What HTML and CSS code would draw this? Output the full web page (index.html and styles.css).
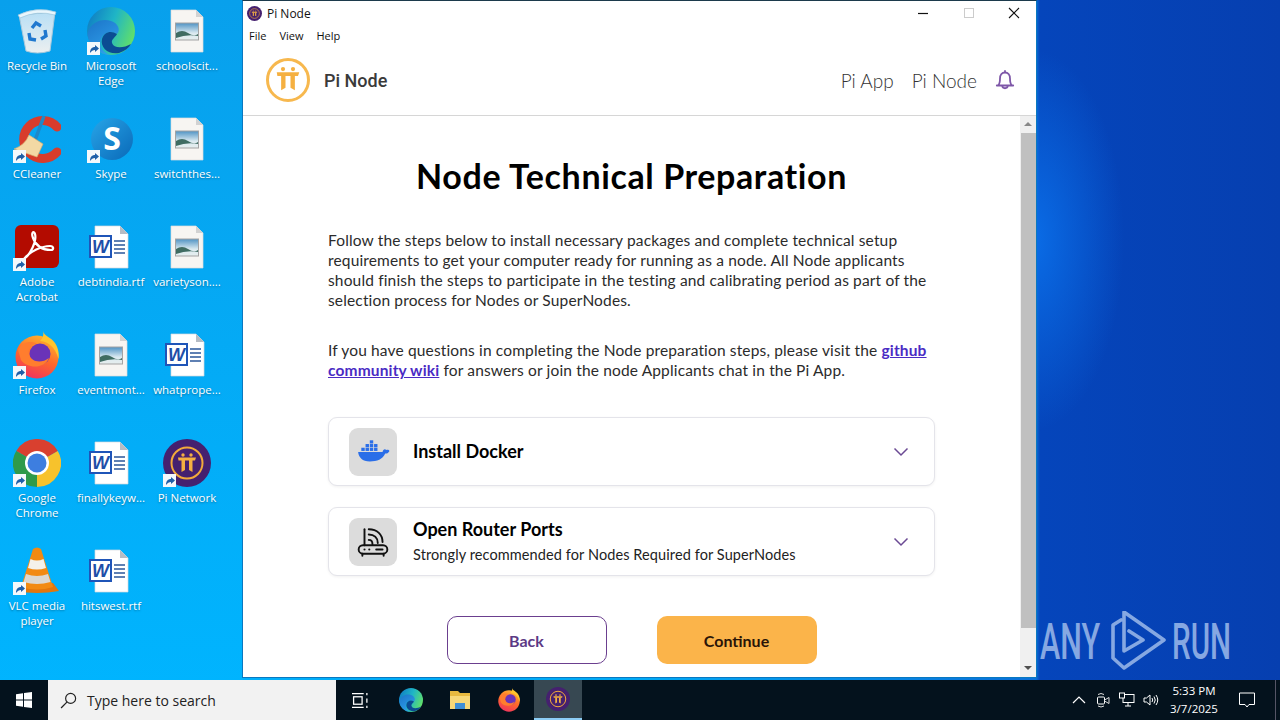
FILE: index.html
```html
<!DOCTYPE html>
<html lang="en">
<head>
<meta charset="utf-8">
<title>Pi Node</title>
<link rel="stylesheet" href="styles.css">
</head>
<body>
<svg class="defs" width="0" height="0" aria-hidden="true">
  <defs>
    <linearGradient id="edgeG" x1="0" y1="0.2" x2="1" y2="0.6"><stop offset="0" stop-color="#0f7cc4"/><stop offset=".5" stop-color="#1fb5c6"/><stop offset="1" stop-color="#62e068"/></linearGradient>
    <linearGradient id="edgeW" x1="0" y1="0" x2="0.6" y2="1"><stop offset="0" stop-color="#1b74c8"/><stop offset="1" stop-color="#2f9fea"/></linearGradient>
    <linearGradient id="skypeG" x1="0" y1="0" x2="1" y2="1"><stop offset="0" stop-color="#27a5e8"/><stop offset="1" stop-color="#0a69b8"/></linearGradient>
    <linearGradient id="foxG" x1="0.7" y1="0" x2="0.3" y2="1"><stop offset="0" stop-color="#ffb52e"/><stop offset=".5" stop-color="#ff6a2a"/><stop offset="1" stop-color="#f0325f"/></linearGradient>
    <linearGradient id="binG" x1="0" y1="0" x2="0" y2="1"><stop offset="0" stop-color="#b8dff5"/><stop offset="1" stop-color="#eceff0"/></linearGradient>
    <linearGradient id="picG" x1="0" y1="0" x2="0" y2="1"><stop offset="0" stop-color="#4f93c4"/><stop offset=".6" stop-color="#dbeaf0"/><stop offset="1" stop-color="#e6eeee"/></linearGradient>

    <symbol id="i-recycle" viewBox="0 0 48 48">
      <path d="M6 8 L42 5 L37 44 Q24 48 13 44 Z" fill="url(#binG)" stroke="#a9c9dc"/>
      <path d="M5 8 Q24 -1 43 5 L42 8 Q24 3 7 11 Z" fill="#e9f6fc" stroke="#9cc6dc" stroke-width=".7"/>
      <g fill="none" stroke="#1f78cf" stroke-width="3.4">
        <path d="M19 21 L23 16 L28 19"/><path d="M32 23 L33 29 L28 32"/><path d="M23 33 L17 32 L16 26"/>
      </g>
    </symbol>
    <symbol id="i-edge" viewBox="0 0 48 48">
      <circle cx="24" cy="24" r="24" fill="url(#edgeG)"/>
      <path d="M0.500 27 C3 15 15 11 24 14 C31 16 34 23 30 27 C26 24 17 24 14 32 C11 40 17 46 23 48 A24 24 0 0 1 0.500 27 Z" fill="url(#edgeW)"/>
      <path d="M30 27 C24 23 17 25 15 32 C13 41 22 48 32 46 C38 44 42 41 44 37 C37 41 27 42 25 36 C24 32 29 30 30 27 Z" fill="#0b4c93"/>
    </symbol>
    <symbol id="i-image" viewBox="0 0 48 48">
      <path d="M8 3 H33 L40 10 V45 H8 Z" fill="#f7f5f2" stroke="#dcdcdc" stroke-width=".7"/>
      <path d="M33 3 V10 H40 Z" fill="#d2d2d2"/>
      <rect x="12.500" y="16" width="23" height="17" fill="url(#picG)" stroke="#a3a3a3"/>
      <path d="M13 26 Q19 22 25 26 T35 27 V29 Q24 27 13 31 Z" fill="#3f6c62"/>
    </symbol>
    <symbol id="i-word" viewBox="0 0 48 48">
      <path d="M8 3 H33 L41 11 V45 H8 Z" fill="#fff" stroke="#d4d8de" stroke-width=".7"/>
      <path d="M33 3 V11 H41 Z" fill="#b6bcc4"/>
      <path d="M27 18 H38 M27 22 H38 M27 26 H38 M27 30 H38" stroke="#2b579a" stroke-width="1.300"/>
      <rect x="3" y="13" width="21" height="21" fill="#fff" stroke="#1f55b8" stroke-width="2"/>
      <text x="13.500" y="29.500" class="svg-w">W</text>
    </symbol>
    <symbol id="i-ccleaner" viewBox="0 0 48 48">
      <path d="M44 12 A19 19 0 1 0 44 37" fill="none" stroke="#d83c2c" stroke-width="9" stroke-linecap="round"/>
      <path d="M31 1 L21 28" stroke="#1f88c8" stroke-width="3.500"/>
      <path d="M16 20 L30 29 L24 42 L1 34 Q12 30 16 20 Z" fill="#f3d9a4" stroke="#d8b070" stroke-width=".7"/>
    </symbol>
    <symbol id="i-skype" viewBox="0 0 48 48">
      <circle cx="25" cy="24" r="21" fill="url(#skypeG)"/>
      <text x="25" y="35" class="svg-s">S</text>
    </symbol>
    <symbol id="i-acrobat" viewBox="0 0 48 48">
      <rect x="2" y="2" width="44" height="43" rx="6" fill="#b30b00"/>
      <path d="M12 35 C17 32 24 18 22 11 C20.500 7 18 10 20 15 C23 23 30 27 38 27 C41 27 41 23 37 23 C29 23 17 28 11 36 C9 39 12 39 12 35 Z" fill="none" stroke="#fff" stroke-width="2.200"/>
    </symbol>
    <symbol id="i-firefox" viewBox="0 0 48 48">
      <circle cx="24" cy="26" r="21.500" fill="url(#foxG)"/>
      <path d="M30 0 C31 5 38 6 42 12 C46 18 46 24 45.500 28 C42 16 36 11 27 10 C30 7 31 4 30 0 Z" fill="#ffc42e"/>
      <circle cx="27" cy="23" r="10.500" fill="#6a33b8"/>
      <path d="M5 19 C9 11 18 9 24 13 C18 13 15 17 16 23 C18 31 28 33 36 27 C32 38 14 38 8 29 Z" fill="#ff7d2e"/>
    </symbol>
    <symbol id="i-chrome" viewBox="0 0 48 48">
      <path d="M24 24 L3.200 12 A24 24 0 0 1 44.800 12 Z" fill="#d9402f"/>
      <path d="M24 24 L44.800 12 A24 24 0 0 1 24 48 Z" fill="#f7c22c"/>
      <path d="M24 24 L24 48 A24 24 0 0 1 3.200 12 Z" fill="#2f9a4a"/>
      <circle cx="24" cy="24" r="12" fill="#fff"/><circle cx="24" cy="24" r="9.500" fill="#3d7ee0"/>
    </symbol>
    <symbol id="i-pi" viewBox="0 0 48 48">
      <circle cx="24" cy="24" r="24" fill="#45206f"/>
      <circle cx="24" cy="24" r="15.500" fill="none" stroke="#f2a93b" stroke-width="2"/>
      <use href="#pi-mark"/>
    </symbol>
    <symbol id="pi-mark" viewBox="0 0 48 48">
      <path d="M15 18.500 H33 L32 21.500 H15.500 Z" fill="#f5b041"/>
      <path d="M18.500 21 H22 V31 L18.500 33 Z" fill="#f5b041"/>
      <path d="M26 21 H29.500 V33 L26 31 Z" fill="#f5b041"/>
      <circle cx="20" cy="16" r="1.700" fill="#f5b041"/><circle cx="28" cy="16" r="1.700" fill="#f5b041"/>
    </symbol>
    <symbol id="i-vlc" viewBox="0 0 48 48">
      <path d="M2 44 L8 36 H40 L46 44 Q24 48 2 44 Z" fill="#e2760c"/>
      <path d="M20 2 Q24 -1 28 2 L40 40 Q24 45 8 40 Z" fill="#f28a12"/>
      <path d="M17.500 12 Q24 15 30.500 12 L33 21 Q24 24 15 21 Z" fill="#f4f1ea"/>
      <path d="M13 27 Q24 31 35 27 L37.500 35 Q24 39 10.500 35 Z" fill="#dcd8d0"/>
    </symbol>
    <symbol id="i-folder" viewBox="0 0 24 24">
      <path d="M2 3 H10 L12 5 H22 V21 H2 Z" fill="#e8b93f"/>
      <rect x="2" y="8" width="20" height="13" fill="#f8d878"/>
      <rect x="7" y="15" width="10" height="6" fill="#3f8fd6"/>
    </symbol>
    <symbol id="i-shortcut" viewBox="0 0 13 13">
      <rect width="13" height="13" fill="#f4f8fb"/>
      <path d="M3 11 C3 7 5 5 8 5 V3 L12 6.500 L8 10 V8 C6 8 4.500 9 3 11 Z" fill="#1f5fa8"/>
    </symbol>
  </defs>
</svg>

<main class="desktop">
  <div class="desk-icon"><span class="ico"><svg class="g48"><use href="#i-recycle"/></svg></span><span class="lbl">Recycle Bin</span></div>
  <div class="desk-icon"><span class="ico"><svg class="g48"><use href="#i-edge"/></svg><svg class="sc"><use href="#i-shortcut"/></svg></span><span class="lbl">Microsoft Edge</span></div>
  <div class="desk-icon"><span class="ico"><svg class="g48"><use href="#i-image"/></svg></span><span class="lbl">schoolscit...</span></div>

  <div class="desk-icon"><span class="ico"><svg class="g48"><use href="#i-ccleaner"/></svg><svg class="sc"><use href="#i-shortcut"/></svg></span><span class="lbl">CCleaner</span></div>
  <div class="desk-icon"><span class="ico"><svg class="g48"><use href="#i-skype"/></svg><svg class="sc"><use href="#i-shortcut"/></svg></span><span class="lbl">Skype</span></div>
  <div class="desk-icon"><span class="ico"><svg class="g48"><use href="#i-image"/></svg></span><span class="lbl">switchthes...</span></div>

  <div class="desk-icon"><span class="ico"><svg class="g48"><use href="#i-acrobat"/></svg><svg class="sc"><use href="#i-shortcut"/></svg></span><span class="lbl">Adobe Acrobat</span></div>
  <div class="desk-icon"><span class="ico"><svg class="g48"><use href="#i-word"/></svg></span><span class="lbl">debtindia.rtf</span></div>
  <div class="desk-icon"><span class="ico"><svg class="g48"><use href="#i-image"/></svg></span><span class="lbl">varietyson....</span></div>

  <div class="desk-icon"><span class="ico"><svg class="g48"><use href="#i-firefox"/></svg><svg class="sc"><use href="#i-shortcut"/></svg></span><span class="lbl">Firefox</span></div>
  <div class="desk-icon"><span class="ico"><svg class="g48"><use href="#i-image"/></svg></span><span class="lbl">eventmont...</span></div>
  <div class="desk-icon"><span class="ico"><svg class="g48"><use href="#i-word"/></svg></span><span class="lbl">whatprope...</span></div>

  <div class="desk-icon"><span class="ico"><svg class="g48"><use href="#i-chrome"/></svg><svg class="sc"><use href="#i-shortcut"/></svg></span><span class="lbl">Google Chrome</span></div>
  <div class="desk-icon"><span class="ico"><svg class="g48"><use href="#i-word"/></svg></span><span class="lbl">finallykeyw...</span></div>
  <div class="desk-icon"><span class="ico"><svg class="g48"><use href="#i-pi"/></svg><svg class="sc"><use href="#i-shortcut"/></svg></span><span class="lbl">Pi Network</span></div>

  <div class="desk-icon"><span class="ico"><svg class="g48"><use href="#i-vlc"/></svg><svg class="sc"><use href="#i-shortcut"/></svg></span><span class="lbl">VLC media player</span></div>
  <div class="desk-icon"><span class="ico"><svg class="g48"><use href="#i-word"/></svg></span><span class="lbl">hitswest.rtf</span></div>
</main>

<svg class="watermark" viewBox="0 0 240 64" width="240" height="64">
  <text x="0" y="48" class="wm" textLength="60" lengthAdjust="spacingAndGlyphs">ANY</text>
  <path d="M81 9 L73 14 V47 L84 57 L124 29 L84 1 V40 L103 29 L89 20" fill="none" stroke="#86a8e2" stroke-width="3.600" stroke-linejoin="round" stroke-linecap="round"/>
  <text x="132" y="48" class="wm" textLength="59" lengthAdjust="spacingAndGlyphs">RUN</text>
</svg>

<section class="window">
  <div class="titlebar">
    <svg class="tb-logo"><use href="#i-pi"/></svg>
    <span class="tb-title">Pi Node</span>
    <div class="tb-controls">
      <svg class="tb-btn" viewBox="0 0 12 12"><path d="M1 6.500 H11" stroke="#111" stroke-width="1.200"/></svg>
      <svg class="tb-btn" viewBox="0 0 12 12"><rect x="1.500" y="1.500" width="9" height="9" fill="none" stroke="#ccc"/></svg>
      <svg class="tb-btn" viewBox="0 0 12 12"><path d="M1 1 L11 11 M11 1 L1 11" stroke="#111" stroke-width="1.100"/></svg>
    </div>
  </div>
  <nav class="menubar"><span>File</span><span>View</span><span>Help</span></nav>
  <header class="app-header">
    <svg class="brand-logo" viewBox="0 0 48 48">
      <circle cx="24" cy="24" r="20.500" fill="none" stroke="#f7b84e" stroke-width="3"/>
      <use href="#pi-mark" x="-6" y="-7" width="60" height="60"/>
    </svg>
    <span class="brand-name">Pi Node</span>
    <div class="header-nav">
      <a>Pi App</a><a>Pi Node</a>
      <svg class="bell" viewBox="0 0 20 20"><path d="M3 15.500 C5 14 5 11 5 8.500 C5 5 7 2.500 10 2.500 C13 2.500 15 5 15 8.500 C15 11 15 14 17 15.500 Z M1.800 15.500 H18.200 M7.200 16 C7.500 19 12.500 19 12.800 16 M10 1 V2.500" fill="none" stroke="#7e57a8" stroke-width="1.800" stroke-linejoin="round" stroke-linecap="round"/></svg>
    </div>
  </header>
  <div class="viewport">
    <div class="content">
      <h1>Node Technical Preparation</h1>
      <p>Follow the steps below to install necessary packages and complete technical setup<br>requirements to get your computer ready for running as a node. All Node applicants<br>should finish the steps to participate in the testing and calibrating period as part of the<br>selection process for Nodes or SuperNodes.</p>
      <p class="p2">If you have questions in completing the Node preparation steps, please visit the <a class="link">github<br>community wiki</a> for answers or join the node Applicants chat in the Pi App.</p>
      <div class="cards">
        <div class="card">
          <span class="card-ico">
            <svg viewBox="0 0 32 32" class="card-svg"><g fill="#2a6ee8"><path d="M2 16 H25 C25.500 13.500 27 13 28.500 14 C30 13.500 31 14 31.500 15 C30.500 17 29 17.500 27.500 17.500 C25 23 20 25 13 25 C6 25 2.500 21 2 16 Z"/><rect x="5" y="12" width="3.200" height="3"/><rect x="9" y="12" width="3.200" height="3"/><rect x="13" y="12" width="3.200" height="3"/><rect x="17" y="12" width="3.200" height="3"/><rect x="9" y="8.500" width="3.200" height="3"/><rect x="13" y="8.500" width="3.200" height="3"/><rect x="17" y="8.500" width="3.200" height="3"/><rect x="13" y="5" width="3.200" height="3"/></g></svg>
          </span>
          <div class="card-text"><strong>Install Docker</strong></div>
          <svg class="chev" viewBox="0 0 16 10"><path d="M1.500 1.500 L8 8 L14.500 1.500" fill="none" stroke="#6b4a94" stroke-width="1.500"/></svg>
        </div>
        <div class="card">
          <span class="card-ico">
            <svg viewBox="0 0 32 32" class="card-svg"><g fill="none" stroke="#111" stroke-width="1.800" stroke-linecap="round"><path d="M8 4 V19"/><path d="M12 4 C20 4 25 9 25 16"/><path d="M12 9 C17 9 20.500 12 20.500 17"/><path d="M12 14 C14 14 15.500 15.500 15.500 18"/><rect x="2.500" y="19" width="27" height="8" rx="4"/><path d="M6 27 V29 M26 27 V29 M19 23 H25"/></g><circle cx="8" cy="23" r="1" fill="#111"/><circle cx="12.500" cy="23" r="1" fill="#111"/></svg>
          </span>
          <div class="card-text"><strong>Open Router Ports</strong><small>Strongly recommended for Nodes Required for SuperNodes</small></div>
          <svg class="chev" viewBox="0 0 16 10"><path d="M1.500 1.500 L8 8 L14.500 1.500" fill="none" stroke="#6b4a94" stroke-width="1.500"/></svg>
        </div>
      </div>
      <div class="actions"><button class="btn btn-back">Back</button><button class="btn btn-next">Continue</button></div>
    </div>
    <aside class="scrollbar">
      <span class="arrow-up"></span>
      <span class="thumb"></span>
      <span class="arrow-down"></span>
    </aside>
  </div>
</section>

<footer class="taskbar">
  <div class="start"><svg viewBox="0 0 16 16" class="win"><path d="M0 2.300 L7 1.300 V7.500 H0 Z M8 1.100 L16 0 V7.500 H8 Z M0 8.500 H7 V14.700 L0 13.700 Z M8 8.500 H16 V16 L8 14.900 Z" fill="#fff"/></svg></div>
  <div class="search"><svg viewBox="0 0 16 16" class="search-ico"><circle cx="10" cy="6" r="4.700" fill="none" stroke="#222" stroke-width="1.100"/><path d="M6.500 9.500 L1 15" stroke="#222" stroke-width="1.200"/></svg><span>Type here to search</span></div>
  <div class="tb-app first"><svg viewBox="0 0 16 16" class="taskview"><path d="M0 1.500 H11 M0 14.500 H11 M14 1 V3 M14 6 V10 M14 13 V15" stroke="#fff" stroke-width="1.200" fill="none"/><rect x="1.500" y="4.500" width="8" height="7" fill="none" stroke="#fff" stroke-width="1.200"/></svg></div>
  <div class="tb-app"><svg class="tb-ico"><use href="#i-edge"/></svg></div>
  <div class="tb-app"><svg class="tb-ico"><use href="#i-folder"/></svg></div>
  <div class="tb-app"><svg class="tb-ico"><use href="#i-firefox"/></svg></div>
  <div class="tb-app active"><svg class="tb-ico"><use href="#i-pi"/></svg></div>
  <div class="tray">
    <svg viewBox="0 0 16 16" class="tray-ico"><path d="M2 11 L8 5 L14 11" fill="none" stroke="#fff" stroke-width="1.200"/></svg>
    <svg viewBox="0 0 16 16" class="tray-ico"><rect x="2.500" y="5" width="7" height="7" rx="1" fill="none" stroke="#fff"/><path d="M9.500 8 L14 5.500 V11.500 L9.500 9 M3 2.500 Q6 .5 9 2.500 M3 14 Q6 16 9 14" fill="none" stroke="#ddd"/></svg>
    <svg viewBox="0 0 16 16" class="tray-ico"><rect x="4" y="2.500" width="11" height="8" fill="none" stroke="#fff"/><rect x="0.500" y="1" width="5" height="5" fill="#04121d" stroke="#fff"/><path d="M9 10.500 V14 M6 14 H12" stroke="#fff"/></svg>
    <svg viewBox="0 0 16 16" class="tray-ico"><path d="M1 6 H3.500 L7 3 V13 L3.500 10 H1 Z M9 6 Q10.500 8 9 10 M11 4.500 Q13.500 8 11 11.500 M13 3 Q16.500 8 13 13" fill="none" stroke="#fff"/></svg>
  </div>
  <div class="clock"><span>5:33 PM</span><span>3/7/2025</span></div>
  <div class="notify"><svg viewBox="0 0 16 16" class="notify-ico"><path d="M.5 1 H15.500 V12.500 H10 L8 15 L6 12.500 H.5 Z" fill="none" stroke="#fff"/></svg></div>
  <div class="peek"></div>
</footer>
</body>
</html>
```

FILE: styles.css
```css
* { box-sizing: border-box; }
html, body { margin: 0; padding: 0; height: 100%; }
body {
  width: 1280px; height: 720px; overflow: hidden; position: relative;
  font-family: "Open Sans", "Liberation Sans", sans-serif;
  background:
    radial-gradient(ellipse 90px 190px at 1034px 240px, #0a6ce6 0%, rgba(10,108,230,0) 100%),
    linear-gradient(180deg, #08a0ec 0, #00b5ff 100%) 0 0 / 243px 100% no-repeat,
    linear-gradient(90deg, #00b2fd 0, #00aaf6 640px, #0a70d8 1036px, #0545bb 1040px, #063fb0 1280px);
}
.defs { position: absolute; }

/* desktop icons */
.desktop {
  display: grid;
  grid-template-columns: 74px 74px 78px;
  grid-auto-rows: 108px;
  width: 226px;
  padding-top: 7px;
}
.desk-icon { display: flex; flex-direction: column; align-items: center; }
.ico { position: relative; width: 48px; height: 48px; display: flex; justify-content: center; align-items: center; }
.g48 { width: 48px; height: 48px; }
.sc { position: absolute; left: 0; bottom: 0; width: 13px; height: 13px; }
.lbl {
  margin-top: 3px; width: 74px; text-align: center; color: #fff;
  font-size: 11.5px; line-height: 15px;
  text-shadow: 0 1px 2px rgba(0,0,0,.35);
}
.svg-w { font: italic 700 18px "Liberation Sans", sans-serif; fill: #1f4fa8; text-anchor: middle; }
.svg-s { font: 700 32px "Open Sans", sans-serif; fill: #fff; text-anchor: middle; }

/* watermark */
.watermark { position: absolute; left: 1040px; top: 611px; }
.wm { font: 500 50px "Roboto", sans-serif; fill: #86a8e2; }

/* window */
.window {
  position: absolute; left: 242px; top: 0; width: 795px; height: 678px;
  background: #fff; border: 1px solid #0a78c0; border-top-color: #1c3a4c;
  display: flex; flex-direction: column;
}
.titlebar { height: 24px; display: flex; align-items: center; padding-left: 4px; flex: none; }
.tb-logo { width: 15px; height: 15px; }
.tb-title { margin-left: 5px; font-size: 12px; color: #111; }
.tb-controls { margin-left: auto; display: flex; gap: 33.5px; padding-right: 16px; }
.tb-btn { width: 12px; height: 12px; }
.menubar { height: 20px; display: flex; align-items: center; gap: 13px; padding-left: 6px; font-size: 11px; color: #111; flex: none; }
.app-header {
  height: 71px; flex: none; display: flex; align-items: center; padding: 0 21px;
  border-bottom: 1px solid #d6d6d6;
}
.brand-logo { width: 48px; height: 48px; }
.brand-name { margin-left: 12px; font: 500 18px "Roboto", "Liberation Sans", sans-serif; color: #3a3a3a; }
.header-nav { margin-left: auto; display: flex; align-items: center; gap: 18px; font: 300 19px "Lato", sans-serif; color: #333; }
.bell { width: 20px; height: 20px; }

.viewport { flex: 1; display: flex; min-height: 0; }
.content { flex: 1; display: flex; flex-direction: column; align-items: center; padding-top: 40px; font-family: "Lato", sans-serif; color: #2b2b2b; }
h1 { margin: 0; font-size: 34px; line-height: 40px; font-weight: 700; color: #000; letter-spacing: .6px; }
p { margin: 34px 0 0; width: 607px; font-size: 15.5px; line-height: 20px; letter-spacing: .15px; }
p.p2 { margin-top: 30px; }
.link { color: #4a2bc4; font-weight: 700; text-decoration: underline; }

.cards { width: 607px; margin-top: 37px; display: flex; flex-direction: column; gap: 21px; }
.card {
  height: 69px; background: #fff; border: 1px solid #e4e4ea; border-radius: 9px;
  box-shadow: 0 1px 3px rgba(0,0,0,.06);
  display: flex; align-items: center; padding: 0 25px 0 20px;
}
.card-ico { width: 48px; height: 48px; border-radius: 9px; background: #dcdcdc; display: flex; justify-content: center; align-items: center; flex: none; }
.card-svg { width: 34px; height: 34px; }
.card-text { margin: -1px 0 0 16px; display: flex; flex-direction: column; flex: 1; }
.card-text strong { font-size: 18px; line-height: 24px; color: #000; font-weight: 700; }
.card-text small { font-size: 14.5px; line-height: 20px; margin-top: 4px; color: #222; letter-spacing: .1px; }
.chev { width: 16px; height: 10px; flex: none; }

.actions { margin-top: 40px; display: flex; gap: 50px; }
.btn { width: 160px; height: 48px; border-radius: 10px; font: 700 16px "Lato", sans-serif; }
.btn-back { background: #fff; border: 1px solid #6b3f8f; color: #5c3a85; }
.btn-next { background: #fbb44a; border: 0; color: #2a1408; }

.scrollbar { width: 16px; flex: none; background: #f0f0f0; display: flex; flex-direction: column; align-items: center; }
.thumb { width: 15px; height: 495px; background: #c0c0c0; margin-left: 1px; }
.arrow-up, .arrow-down { width: 0; height: 0; border-left: 4px solid transparent; border-right: 4px solid transparent; }
.arrow-up { border-bottom: 4px solid #888; margin: 6px 0 7px; }
.arrow-down { border-top: 4px solid #505050; margin-top: 38px; }

/* taskbar */
.taskbar {
  position: absolute; left: 0; bottom: 0; width: 1280px; height: 40px;
  background: #04121d; display: flex; align-items: stretch;
}
.start { width: 48px; display: flex; align-items: center; justify-content: center; }
.win { width: 16px; height: 16px; }
.search { width: 288px; background: #f2f2f2; display: flex; align-items: center; padding-left: 12px; color: #222; font-size: 14px; }
.search-ico { width: 17px; height: 17px; margin-right: 10px; }
.tb-app { width: 48px; margin-right: 1px; display: flex; align-items: center; justify-content: center; }
.tb-app.first { margin-right: 3px; }
.tb-app.active { background: #374852; border-bottom: 2px solid #8ccdf5; }
.tb-ico { width: 24px; height: 24px; }
.taskview { width: 17px; height: 17px; }
.tray { margin-left: auto; display: flex; align-items: center; gap: 8px; }
.tray-ico { width: 16px; height: 16px; }
.clock { width: 50px; margin-left: 10px; display: flex; flex-direction: column; align-items: center; justify-content: center; color: #fff; font-size: 11.5px; line-height: 18px; }
.notify { width: 56px; display: flex; align-items: center; justify-content: center; }
.notify-ico { width: 16px; height: 16px; }
.peek { width: 5px; border-left: 1px solid #556; }
```
